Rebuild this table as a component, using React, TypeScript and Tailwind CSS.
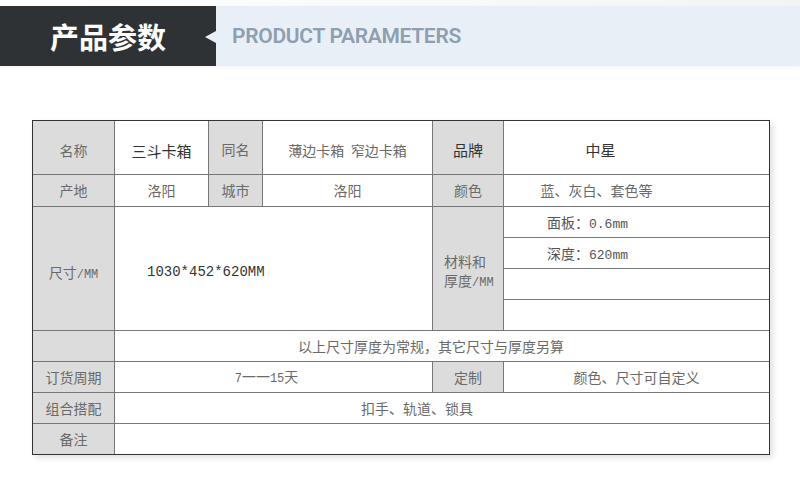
import React from "react";

const cjk = { fontFamily: '"Noto Sans CJK SC", "Liberation Sans", sans-serif' };
const mono = { fontFamily: '"Liberation Mono", "Noto Sans CJK SC", monospace' };

const Label = ({ children, className = "" }: { children?: React.ReactNode; className?: string }) => (
    <div className={`bg-[#dcdcdc] text-[#6a6a6a] text-[14px] flex items-center justify-center ${className}`}>
        {children}
    </div>
);

const Cell = ({ children, className = "" }: { children?: React.ReactNode; className?: string }) => (
    <div className={`bg-white text-[#6a6a6a] text-[14px] flex items-center ${className}`}>{children}</div>
);

const App = () => {
    return (
        <div className="w-[800px] h-[504px] bg-white overflow-hidden" style={cjk}>
            <div className="h-[6px] bg-gradient-to-r from-white to-[#f4f4f4]" />
            <div className="flex h-[60px] shadow-[0_2px_4px_rgba(0,0,0,0.04)]">
                <div className="relative w-[216px] bg-[#2f3235] flex items-center pl-[50px]">
                    <span className="text-white text-[29px] font-bold leading-none">产品参数</span>
                    <span className="absolute right-0 top-[25px] w-0 h-0 border-y-[6px] border-y-transparent border-r-[11px] border-r-[#e9eff6]" />
                </div>
                <div className="flex-1 bg-[#e9eff6] flex items-center pl-[16px]">
                    <span
                        className="text-[#8d9fb0] text-[21px] font-semibold leading-none tracking-[-0.3px]"
                        style={{ fontFamily: "Roboto, sans-serif" }}
                    >
                        PRODUCT PARAMETERS
                    </span>
                </div>
            </div>

            <div className="pl-[32px] pt-[54px]">
                <div className="w-[738px] grid grid-cols-[81px_93px_53px_169px_70px_265px] grid-rows-[53px_31px_30px_30px_30px_30px_30px_30px_30px_30px] gap-px bg-[#777] border border-[#333] shadow-[3px_3px_6px_rgba(0,0,0,0.12)]">
                    <Label className="pt-[6px]">名称</Label>
                    <Cell className="justify-center pt-[8px] text-[#333] text-[15px]">三斗卡箱</Cell>
                    <Label className="pt-[4px]">同名</Label>
                    <Cell className="justify-center pt-[6px]">薄边卡箱&nbsp;&nbsp;窄边卡箱</Cell>
                    <Label className="pt-[6px] text-[#333] text-[15px]">品牌</Label>
                    <Cell className="justify-center pr-[72px] pt-[6px] text-[#333] text-[15px]">中星</Cell>

                    <Label>产地</Label>
                    <Cell className="justify-center">洛阳</Cell>
                    <Label>城市</Label>
                    <Cell className="justify-center">洛阳</Cell>
                    <Label>颜色</Label>
                    <Cell className="justify-center pr-[80px]">蓝、灰白、套色等</Cell>

                    <Label className="row-span-4 pt-[8px]">
                        <span>
                            尺寸<span style={mono} className="text-[12px]">/MM</span>
                        </span>
                    </Label>
                    <Cell className="col-span-3 row-span-4 pl-[32px] pt-[8px] text-[#333] text-[12.5px]">
                        <span style={mono}>1030*452*620MM</span>
                    </Cell>
                    <Label className="row-span-4 !justify-start pl-[11px] pt-[8px]">
                        <div className="leading-[19px]">
                            <div>材料和</div>
                            <div>
                                厚度<span style={mono} className="text-[12px]">/MM</span>
                            </div>
                        </div>
                    </Label>
                    <Cell className="pl-[43px] pt-[2px] text-[#555]">
                        <span>
                            面板：<span style={mono} className="text-[13px]">0.6mm</span>
                        </span>
                    </Cell>
                    <Cell className="pl-[43px] pt-[2px] text-[#555]">
                        <span>
                            深度：<span style={mono} className="text-[13px]">620mm</span>
                        </span>
                    </Cell>
                    <Cell />
                    <Cell />

                    <Label />
                    <Cell className="col-span-5 justify-center pr-[22px]">以上尺寸厚度为常规，其它尺寸与厚度另算</Cell>

                    <Label>订货周期</Label>
                    <Cell className="col-span-3 justify-center pr-[14px]">
                        <span>
                            <span style={mono} className="text-[12px]">7</span>一一<span style={mono} className="text-[12px]">15</span>天
                        </span>
                    </Cell>
                    <Label>定制</Label>
                    <Cell className="justify-center">颜色、尺寸可自定义</Cell>

                    <Label>组合搭配</Label>
                    <Cell className="col-span-5 justify-center pr-[50px]">扣手、轨道、锁具</Cell>

                    <Label>备注</Label>
                    <Cell className="col-span-5" />
                </div>
            </div>
        </div>
    );
};

export default App;
